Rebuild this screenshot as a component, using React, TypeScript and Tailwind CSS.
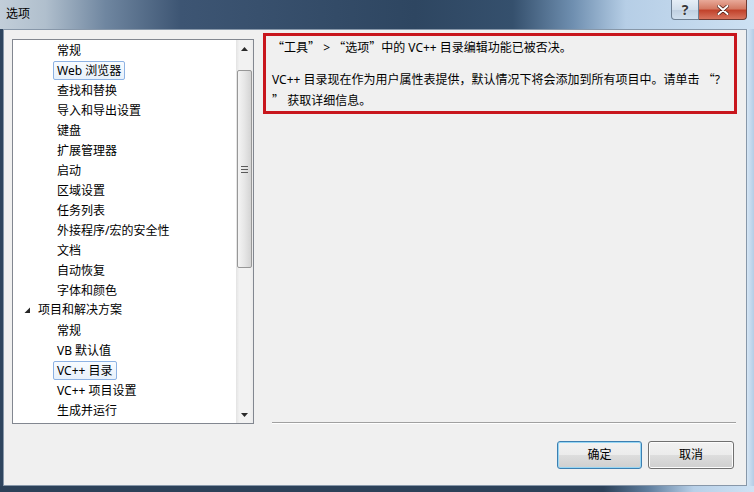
import React from "react";

type Item = { t: string; l: 1 | 2; sel?: boolean; exp?: boolean };

const items: Item[] = [
  { t: "常规", l: 2 },
  { t: "Web 浏览器", l: 2, sel: true },
  { t: "查找和替换", l: 2 },
  { t: "导入和导出设置", l: 2 },
  { t: "键盘", l: 2 },
  { t: "扩展管理器", l: 2 },
  { t: "启动", l: 2 },
  { t: "区域设置", l: 2 },
  { t: "任务列表", l: 2 },
  { t: "外接程序/宏的安全性", l: 2 },
  { t: "文档", l: 2 },
  { t: "自动恢复", l: 2 },
  { t: "字体和颜色", l: 2 },
  { t: "项目和解决方案", l: 1, exp: true },
  { t: "常规", l: 2 },
  { t: "VB 默认值", l: 2 },
  { t: "VC++ 目录", l: 2, sel: true },
  { t: "VC++ 项目设置", l: 2 },
  { t: "生成并运行", l: 2 },
];

function Row({ it }: { it: Item }) {
  if (it.l === 1) {
    return (
      <div className="h-[20px] flex items-center pl-[11px]">
        <svg width="7" height="7" viewBox="0 0 7 7" className="mr-[7px]">
          <polygon points="6,0.5 6,6 0.5,6" fill="#262626" />
        </svg>
        <span>{it.t}</span>
      </div>
    );
  }
  return (
    <div className="h-[20px] flex items-start pl-[40px] pt-[1px]">
      <span
        className={
          "h-[19px] flex items-center px-[3px] border rounded-[2px] " +
          (it.sel
            ? "border-[#8db2e3] bg-[linear-gradient(#f7fbff,#e8f1fb)]"
            : "border-transparent")
        }
      >
        {it.t}
      </span>
    </div>
  );
}

function Q({ c }: { c: string }) {
  return <span className="font-['Noto_Sans_CJK_SC',sans-serif]">{c}</span>;
}

function Tree() {
  return (
    <div className="w-[242px] h-[385px] border border-[#828790] bg-white flex overflow-hidden">
      <div className="flex-1 flex flex-col">
        {items.map((it, i) => (
          <Row key={i} it={it} />
        ))}
      </div>
      <div className="w-[17px] flex flex-col bg-[linear-gradient(to_right,#e3e3e3,#f2f2f2_20%,#f2f2f2_80%,#ebebeb)]">
        <div className="h-[17px] flex items-center justify-center">
          <svg width="7" height="4" viewBox="0 0 7 4">
            <polygon points="3.5,0 7,4 0,4" fill="#2a2a2a" />
          </svg>
        </div>
        <div className="flex-1 px-[1px]">
          <div className="mt-[13px] h-[198px] rounded-[2px] border border-[#979797] bg-[linear-gradient(to_right,#f4f4f4,#e6e6e6_50%,#d4d4d4)] flex items-center justify-center">
            <div className="flex flex-col gap-[2px]">
              <div className="w-[7px] h-[1px] bg-[#5a5a5a]" />
              <div className="w-[7px] h-[1px] bg-[#5a5a5a]" />
              <div className="w-[7px] h-[1px] bg-[#5a5a5a]" />
            </div>
          </div>
        </div>
        <div className="h-[17px] flex items-center justify-center">
          <svg width="7" height="4" viewBox="0 0 7 4">
            <polygon points="0,0 7,0 3.5,4" fill="#2a2a2a" />
          </svg>
        </div>
      </div>
    </div>
  );
}

export default function App() {
  return (
    <div className="w-[754px] h-[492px] overflow-hidden flex flex-col font-['Noto_Sans','Noto_Sans_CJK_SC',sans-serif] text-[12px] text-black bg-[#2c4159]">
      {/* Title bar */}
      <div className="h-[29px] flex items-start relative bg-[linear-gradient(to_right,#c2ced9_0%,#b0bfcd_6%,#6f86a0_14%,#3d5573_24%,#2e4661_55%,#35506d_68%,#6f8fb0_76%,#b6cee6_83%,#cde1f3_100%)]">
        <div className="pl-[6px] pt-[5px] leading-[18px]">选项</div>
        <div className="ml-auto mr-[7px] flex h-[20px]">
          <div className="w-[28px] h-[20px] border border-[#6d7f92] border-t-0 rounded-bl-[4px] bg-[linear-gradient(#e6eef6,#d2dfeb_50%,#bfcfe0_51%,#d0e0ef)] flex items-center justify-center">
            <span className="text-[14px] font-bold leading-none text-[#3a3a3a] [text-shadow:0_0_2px_#fff]">?</span>
          </div>
          <div className="w-[48px] h-[20px] border border-[#6e3a32] border-l-0 border-t-0 rounded-br-[4px] bg-[linear-gradient(#e8a999,#d47a64_45%,#c1432c_55%,#d7745e)] flex items-center justify-center">
            <svg width="12" height="10" viewBox="0 0 12 10">
              <path d="M1.5 1 L10.5 9 M10.5 1 L1.5 9" stroke="#4a1a12" strokeWidth="3.4" strokeLinecap="round" />
              <path d="M1.5 1 L10.5 9 M10.5 1 L1.5 9" stroke="#ffffff" strokeWidth="2" strokeLinecap="round" />
            </svg>
          </div>
        </div>
      </div>

      {/* Body */}
      <div className="h-[457px] flex">
        <div className="w-[3px] bg-[#2f455f]" />
        <div className="w-[744px] border border-[#8797a9] bg-[#f0f0f0] flex flex-col">
          <div className="flex">
            <div className="ml-[8px] mt-[9px]">
              <Tree />
            </div>
            <div className="ml-[9px] mt-[3px] w-[474px] h-[391px] flex flex-col justify-between">
              <div className="h-[81px] border-[3px] border-[#c8161d] pl-[6px]">
                <div className="mt-[1px] h-[20px] leading-[20px] whitespace-nowrap">
                  <Q c="“" />工具<Q c="”" /> &gt; <Q c="“" />选项<Q c="”" />中的 VC++ 目录编辑功能已被否决。
                </div>
                <div className="mt-[12px] leading-[20px] whitespace-nowrap">
                  <div>
                    VC++ 目录现在作为用户属性表提供，默认情况下将会添加到所有项目中。请单击 <Q c="“" />?
                  </div>
                  <div>
                    <Q c="”" /> 获取详细信息。
                  </div>
                </div>
              </div>
              <div className="ml-[9px] w-[464px] h-[2px] border-t border-[#a0a0a0] border-b border-b-white" />
            </div>
          </div>
          <div className="mt-[17px] flex justify-end pr-[12px] gap-[6px]">
            <button className="w-[85px] h-[28px] rounded-[3px] border border-[#3c7fb1] shadow-[inset_0_0_0_1px_#97d6f4] bg-[linear-gradient(#f2f2f2,#ebebeb_50%,#dddddd_51%,#cfcfcf)] flex items-center justify-center">
              确定
            </button>
            <button className="w-[86px] h-[28px] rounded-[3px] border border-[#707070] shadow-[inset_0_0_0_1px_#fcfcfc] bg-[linear-gradient(#f2f2f2,#ebebeb_50%,#dddddd_51%,#cfcfcf)] flex items-center justify-center">
              取消
            </button>
          </div>
        </div>
        <div className="w-[7px] bg-[linear-gradient(to_right,#d6e6f5,#b4cde6)]" />
      </div>

      {/* Bottom frame */}
      <div className="h-[6px] bg-[linear-gradient(to_right,#2c4159_0%,#2c4159_80%,#5f7e9e_86%,#b8d0e8_92%,#cfe2f4_100%)]" />
    </div>
  );
}
